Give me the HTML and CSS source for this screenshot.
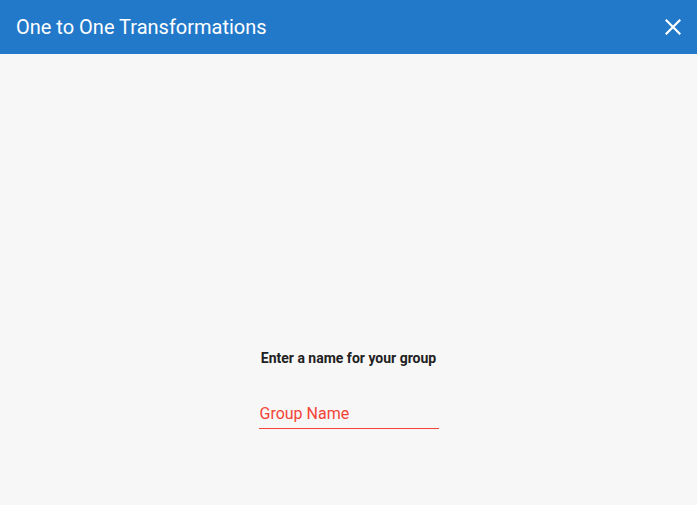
FILE: index.html
```html
<!DOCTYPE html>
<html>
<head>
<meta charset="utf-8">
<link rel="stylesheet" href="styles.css">
</head>
<body>
<div class="dialog">
  <header class="bar">
    <h1 class="title">One to One Transformations</h1>
    <button class="close" aria-label="Close">
      <svg width="16" height="16" viewBox="0 0 16 16"><path d="M1.5 1.5 L14.5 14.5 M14.5 1.5 L1.5 14.5" stroke="#fff" stroke-width="2.2" stroke-linecap="square"/></svg>
    </button>
  </header>
  <main class="content">
    <p class="prompt">Enter a name for your group</p>
    <div class="field-wrap">
      <input class="field" type="text" placeholder="Group Name">
      <div class="underline"></div>
    </div>
  </main>
</div>
</body>
</html>
```
FILE: styles.css
```css
html, body {
  margin: 0;
  padding: 0;
  height: 100%;
  background: #f7f7f7;
  font-family: Roboto, "Noto Sans", sans-serif;
}
.dialog {
  display: flex;
  flex-direction: column;
  height: 100%;
}
.bar {
  height: 54px;
  background: #2379c9;
  display: flex;
  align-items: center;
  justify-content: space-between;
  padding: 0 16px;
  box-sizing: border-box;
  flex: none;
}
.title {
  margin: 0;
  font-size: 20px;
  font-weight: 400;
  color: #fff;
  line-height: 24px;
}
.close {
  background: none;
  border: 0;
  padding: 0;
  width: 16px;
  height: 16px;
  display: flex;
  cursor: pointer;
}
.content {
  flex: 1;
  display: flex;
  flex-direction: column;
  align-items: center;
  padding-top: 294px;
}
.prompt {
  margin: 0;
  font-size: 14px;
  font-weight: 700;
  line-height: 20px;
  color: #212121;
}
.field-wrap {
  margin-top: 31px;
  width: 180px;
  display: flex;
  flex-direction: column;
}
.field {
  display: block;
  width: 100%;
  box-sizing: border-box;
  border: 0;
  background: transparent;
  font-family: Roboto, "Noto Sans", sans-serif;
  font-size: 16px;
  line-height: 18px;
  height: 29px;
  padding: 5px 0 5px 1px;
  outline: none;
  color: #212121;
}
.field::placeholder {
  color: #f44336;
  opacity: 1;
}
.underline {
  height: 1px;
  background: #f44336;
}
```
